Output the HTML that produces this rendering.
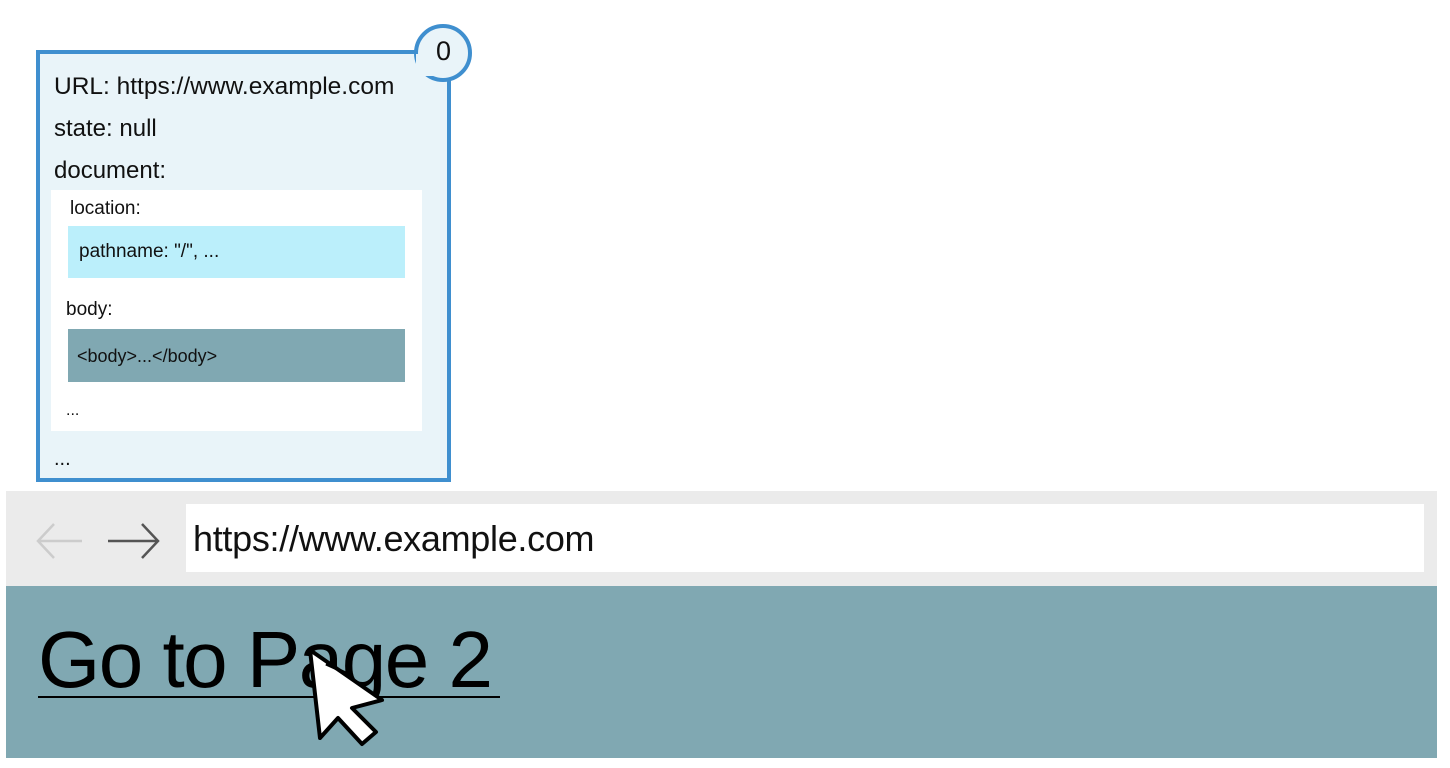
<!DOCTYPE html>
<html><head><style>
body{margin:0;width:1450px;height:768px;background:#fff;position:relative;overflow:hidden;font-family:"Comic Sans MS","Liberation Sans",sans-serif;color:#111}
.a{position:absolute}
</style></head><body>
<div class="a" style="left:36px;top:50px;width:407px;height:424px;border:4px solid #3f8fcf;background:#e9f4f9"></div>
<div class="a" style="left:414px;top:24px;width:50px;height:50px;border:4px solid #3f8fcf;border-radius:50%;background:#e9f4f9"></div>
<div class="a" style="left:416px;top:54px;width:34px;height:22px;background:#e9f4f9"></div>
<div class="a" style="left:436px;top:36px;font-size:27px">0</div>
<div class="a" style="left:54px;top:73px;font-size:24.5px">URL: https://www.example.com</div>
<div class="a" style="left:54px;top:115px;font-size:24px">state: null</div>
<div class="a" style="left:54px;top:157px;font-size:24px">document:</div>
<div class="a" style="left:51px;top:190px;width:371px;height:241px;background:#fff"></div>
<div class="a" style="left:70px;top:198px;font-size:19px">location:</div>
<div class="a" style="left:68px;top:226px;width:337px;height:52px;background:#bbeffb"></div>
<div class="a" style="left:79px;top:241px;font-size:19px">pathname: "/", ...</div>
<div class="a" style="left:66px;top:299px;font-size:19px">body:</div>
<div class="a" style="left:68px;top:329px;width:337px;height:53px;background:#80a8b2"></div>
<div class="a" style="left:77px;top:346px;font-size:18px">&lt;body&gt;...&lt;/body&gt;</div>
<div class="a" style="left:66px;top:402px;font-size:16px">...</div>
<div class="a" style="left:54px;top:448px;font-size:20px">...</div>
<div class="a" style="left:6px;top:491px;width:1431px;height:95px;background:#ebebeb"></div>
<div class="a" style="left:186px;top:504px;width:1238px;height:68px;background:#fff"></div>
<svg class="a" style="left:34px;top:516px" width="130" height="50"><path d="M48 25H4M20 8L4 25L20 42" stroke="#ccc" stroke-width="2.5" fill="none"/><path d="M74 25H124M108 8L124 25L108 42" stroke="#555" stroke-width="2.5" fill="none"/></svg>
<div class="a" style="left:193px;top:518px;font-size:36px;letter-spacing:-0.3px">https://www.example.com</div>
<div class="a" style="left:6px;top:586px;width:1431px;height:172px;background:#80a8b2"></div>
<div class="a" style="left:38px;top:610px;font-size:80px;line-height:100px;color:#000;letter-spacing:-1.5px">Go to Page 2</div>
<div class="a" style="left:38px;top:696px;width:462px;height:2px;background:#000"></div>
<svg class="a" style="left:290px;top:640px" width="110" height="110"><path d="M20 10L30 98L48 78L72 104L86 92L62 68L92 60Z" fill="#fff" stroke="#000" stroke-width="4" stroke-linejoin="round"/><path d="M36 24L58 34" stroke="#000" stroke-width="3"/></svg>
</body></html>
